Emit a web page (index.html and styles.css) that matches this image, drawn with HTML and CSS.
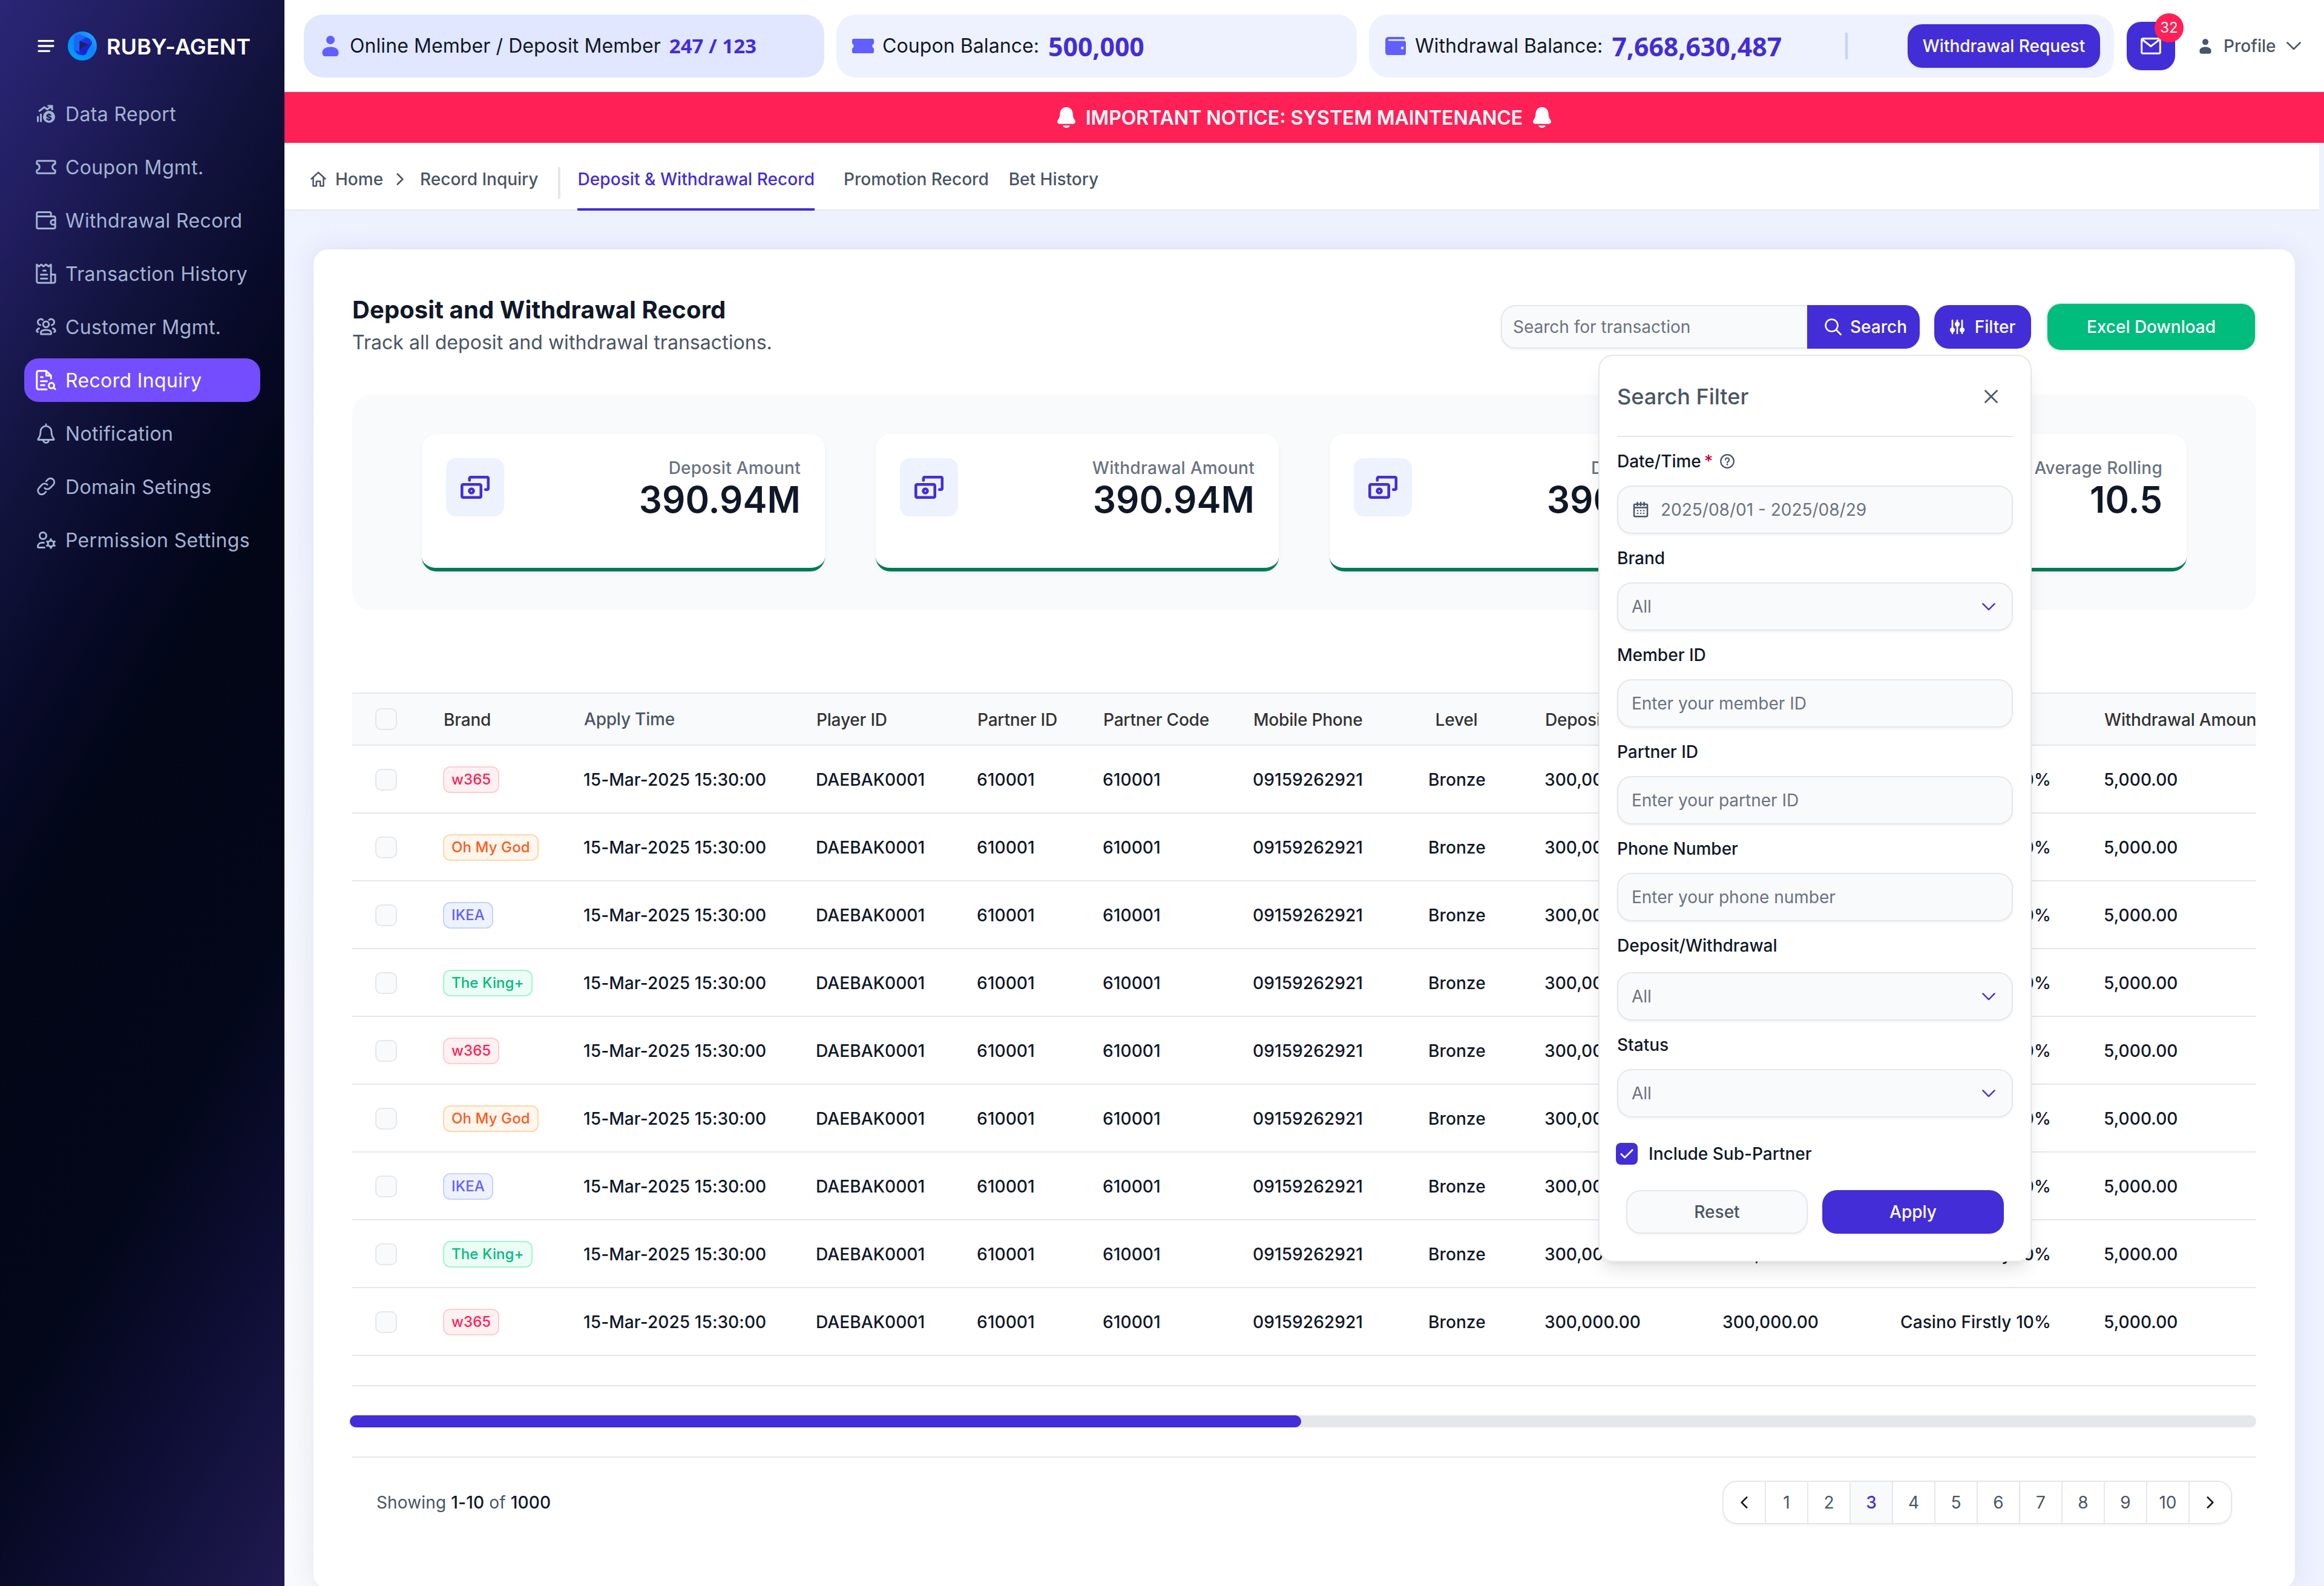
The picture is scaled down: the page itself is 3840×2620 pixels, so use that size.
FILE: index.html
```html
<!DOCTYPE html>
<html lang="en">
<head>
<meta charset="utf-8">
<title>Ruby-Agent – Deposit and Withdrawal Record</title>
<link rel="stylesheet" href="styles.css">
</head>
<body>
<svg class="sprite" aria-hidden="true">
  <defs>
    <linearGradient id="lg-base" x1="0" y1="1" x2="1" y2="0"><stop offset="0" stop-color="#00a2ff"/><stop offset=".6" stop-color="#0a84ff"/><stop offset="1" stop-color="#2cb1ff"/></linearGradient>
    <linearGradient id="lg-ring" x1="0" y1="0" x2="1" y2="1"><stop offset="0" stop-color="#1f6dff"/><stop offset=".5" stop-color="#1a35dc"/><stop offset="1" stop-color="#1a2fd4"/></linearGradient>
  </defs>
  <symbol id="i-menu" viewBox="0 0 40 40"><path d="M8 11.7h24M8 20h24M8 28.3h17.500" stroke="currentColor" stroke-width="3.300" stroke-linecap="round"/></symbol>
  <symbol id="i-chart" viewBox="0 0 40 40"><path d="M6.600 25v7.300M11.600 21v11.300M9.200 15.300l8-6.200 5 3.600 6.500-5.200" fill="none" stroke="currentColor" stroke-width="3" stroke-linecap="round" stroke-linejoin="round"/><path d="M22.500 5.400h7.700a1.400 1.400 0 0 1 1.400 1.400v7.200h-2.600l-1-3.500-3.300 1.200 1-3.400-3.200-.6z" fill="currentColor"/><circle cx="25" cy="25" r="10" fill="currentColor"/><text x="25" y="30.500" text-anchor="middle" font-size="15" font-weight="800" fill="#1f1c5a">$</text></symbol>
  <symbol id="i-ticket" viewBox="0 0 40 40"><path d="M6.500 9.800h27a1.700 1.700 0 0 1 1.700 1.700v3c-3 1-4.500 3-4.500 5.500s1.500 4.500 4.500 5.500v3a1.700 1.700 0 0 1-1.700 1.700h-27a1.700 1.700 0 0 1-1.700-1.700v-3c3-1 4.500-3 4.500-5.500s-1.500-4.500-4.500-5.500v-3a1.700 1.700 0 0 1 1.700-1.700z" fill="none" stroke="currentColor" stroke-width="3" stroke-linejoin="round"/></symbol>
  <symbol id="i-wallet" viewBox="0 0 40 40"><path d="M28.200 13.400V9a2.400 2.400 0 0 0-2.400-2.400H7.200A2.400 2.400 0 0 0 4.800 9v22a2.400 2.400 0 0 0 2.400 2.400h25.600a2.400 2.400 0 0 0 2.400-2.400V15.800a2.400 2.400 0 0 0-2.400-2.400H5M35 19.500h-3.400a3.800 3.800 0 0 0 0 7.600H35" fill="none" stroke="currentColor" stroke-width="3" stroke-linejoin="round"/></symbol>
  <symbol id="i-receipt" viewBox="0 0 40 40"><path d="M28.200 35.200V5l-4 3.200-4-3.200h-.7l-3.500 3.200L12 5l-3.600 3.200L4.800 5v27.500a2.700 2.700 0 0 0 2.700 2.700h25a2.700 2.700 0 0 0 2.700-2.700V21.600h-7M15.500 15h4M11.500 21.700h10.500M11.500 28.300h10.500" fill="none" stroke="currentColor" stroke-width="3" stroke-linejoin="round" stroke-linecap="round"/></symbol>
  <symbol id="i-users" viewBox="0 0 40 40"><g fill="none" stroke="currentColor" stroke-width="3" stroke-linecap="round" stroke-linejoin="round"><circle cx="20" cy="15.800" r="4.800"/><path d="M11.300 30.200c0-3.200 3.300-5.200 8.700-5.200s8.700 2 8.700 5.200c0 1.200-.6 1.900-1.700 1.900H13c-1.100 0-1.700-.7-1.700-1.900zM10.500 17a5 5 0 1 1 4.300-8.600M29.500 17a5 5 0 1 0-4.300-8.600M8.500 22.500c-2.400.8-3.700 2.300-3.700 4.200 0 .9.500 1.500 1.700 1.500M31.500 22.500c2.400.8 3.700 2.300 3.700 4.200 0 .9-.5 1.500-1.700 1.500"/></g></symbol>
  <symbol id="i-docsearch" viewBox="0 0 40 40"><g fill="none" stroke="currentColor" stroke-width="3" stroke-linecap="round" stroke-linejoin="round"><path d="M21 35.200H7.500a2.700 2.700 0 0 1-2.700-2.700v-25a2.700 2.700 0 0 1 2.700-2.700h13l7.700 7.500v5M20.500 5v7.500H28M11.500 15h3M11.500 21.700h10M11.500 28.300h6"/><circle cx="29" cy="29" r="4.500"/><path d="M32.500 32.300l2.700 2.500"/></g></symbol>
  <symbol id="i-bell" viewBox="0 0 40 40"><path d="M20 5v2.500M20 7.800a9 9 0 0 0-9 9c0 6.500-1.300 9.300-4 12.200v1.500h26V29c-2.700-2.900-4-5.700-4-12.200a9 9 0 0 0-9-9zM15.500 32c.6 2.200 2.200 3.400 4.500 3.400s3.900-1.200 4.500-3.400" fill="none" stroke="currentColor" stroke-width="2.800" stroke-linejoin="round" stroke-linecap="round"/></symbol>
  <symbol id="i-link" viewBox="0 0 40 40"><path d="M17.300 22.700a6.300 6.300 0 0 0 8.900 0l5.400-5.400a6.300 6.300 0 0 0-8.900-8.900l-3 3M21.700 17.300a6.300 6.300 0 0 0-8.900 0l-5 5.400a6.300 6.300 0 0 0 8.900 8.900l2.700-2.700" transform="translate(.5 -.5)" fill="none" stroke="currentColor" stroke-width="2.800" stroke-linecap="round"/></symbol>
  <symbol id="i-usercog" viewBox="0 0 40 40"><g fill="none" stroke="currentColor" stroke-width="3" stroke-linecap="round" stroke-linejoin="round"><circle cx="15" cy="13" r="5.500"/><path d="M17.500 32.500H8a1.500 1.500 0 0 1-1.500-1.500c0-4 3-6.500 7-6.500h3"/><circle cx="28" cy="26" r="4.800"/></g><path d="M28 17.500v3M28 31.500v3M35.400 21.800l-2.600 1.500M23.200 28.700l-2.600 1.500M20.600 21.800l2.600 1.500M32.800 28.700l2.600 1.500" stroke="currentColor" stroke-width="3.200"/></symbol>
  <symbol id="i-person" viewBox="0 0 28 34"><circle cx="14" cy="7" r="7" fill="currentColor"/><path d="M14 18.500c8 0 13.500 3.400 13.500 9.200 0 4.300-2 6.300-5 6.300h-17c-3 0-5-2-5-6.300C.5 21.900 6 18.500 14 18.500z" fill="currentColor"/></symbol>
  <symbol id="i-ticketfill" viewBox="0 0 36 24"><path d="M2.500 0h31A2.500 2.500 0 0 1 36 2.500V8c-1.700.8-2.600 2.200-2.600 4s.9 3.200 2.600 4v5.500a2.500 2.500 0 0 1-2.500 2.500h-31A2.500 2.500 0 0 1 0 21.500V16c1.700-.8 2.600-2.200 2.600-4S1.700 8.800 0 8V2.500A2.500 2.500 0 0 1 2.500 0z" fill="currentColor"/></symbol>
  <symbol id="i-walletfill" viewBox="0 0 34 30"><path d="M5 0h24.500A2.500 2.500 0 0 1 32 2.500V4H6a1.200 1.200 0 0 0 0 2.600h25a3 3 0 0 1 3 3V27a3 3 0 0 1-3 3H4.500A4.500 4.500 0 0 1 0 25.500V5a5 5 0 0 1 5-5zm23 16a2.200 2.200 0 1 0 0 4.400 2.200 2.200 0 0 0 0-4.400z" fill="currentColor"/></symbol>
  <symbol id="i-bellfill" viewBox="0 0 30 34"><path d="M15 0c6 0 10.200 4.400 10.600 10.500.3 4.800.8 7 2.900 10 1 1.400 1.500 2.400 1.500 3.600 0 2.400-1.800 3.700-4.600 3.700H4.600C1.800 27.800 0 26.500 0 24.100c0-1.200.5-2.200 1.500-3.600 2.100-3 2.600-5.200 2.900-10C4.800 4.400 9 0 15 0zM9 30.500h12c-.6 2.200-3 3.500-6 3.500s-5.400-1.300-6-3.500z" fill="currentColor"/></symbol>
  <symbol id="i-mail" viewBox="0 0 34 28"><path d="M3.500 1.700h27a1.800 1.800 0 0 1 1.800 1.800v21a1.800 1.800 0 0 1-1.800 1.800h-27a1.800 1.800 0 0 1-1.800-1.800v-21a1.800 1.800 0 0 1 1.800-1.800zM3.500 4L17 14.500 30.500 4" fill="none" stroke="currentColor" stroke-width="3" stroke-linejoin="round"/></symbol>
  <symbol id="i-down" viewBox="0 0 24 14"><path d="M1.500 1.500L12 12 22.500 1.500" fill="none" stroke="currentColor" stroke-width="2.600" stroke-linecap="round" stroke-linejoin="round"/></symbol>
  <symbol id="i-right" viewBox="0 0 12 20"><path d="M1.800 1.500L10.300 10l-8.500 8.500" fill="none" stroke="currentColor" stroke-width="2.600" stroke-linecap="round" stroke-linejoin="round"/></symbol>
  <symbol id="i-left" viewBox="0 0 12 20"><path d="M10.200 1.500L1.700 10l8.500 8.500" fill="none" stroke="currentColor" stroke-width="2.600" stroke-linecap="round" stroke-linejoin="round"/></symbol>
  <symbol id="i-home" viewBox="0 0 26 26"><path d="M1.500 12.500L13 1.800l11.500 10.700M4.500 10.500v13.700h5.300v-7.700h6.400v7.700h5.300V10.500" fill="none" stroke="currentColor" stroke-width="2.500" stroke-linejoin="round" stroke-linecap="round"/></symbol>
  <symbol id="i-search" viewBox="0 0 28 28"><circle cx="11.500" cy="11.500" r="10" fill="none" stroke="currentColor" stroke-width="2.600"/><path d="M19.500 19.500l7 7" stroke="currentColor" stroke-width="2.800" stroke-linecap="round"/></symbol>
  <symbol id="i-sliders" viewBox="0 0 24 24"><path d="M4 1.300v21.400M12 1.300v21.400M20 1.300v21.400" stroke="currentColor" stroke-width="2.700" stroke-linecap="round"/><circle cx="4" cy="17" r="4" fill="currentColor"/><circle cx="12" cy="7.500" r="4" fill="currentColor"/><circle cx="20" cy="17" r="4" fill="currentColor"/></symbol>
  <symbol id="i-money" viewBox="0 0 48 38"><g fill="none" stroke="currentColor" stroke-width="4.600" stroke-linecap="round" stroke-linejoin="round"><path d="M14.800 7.500V4.200a2 2 0 0 1 2-2h27a2 2 0 0 1 2 2v16.600a2 2 0 0 1-2 2h-2.600"/><rect x="2.300" y="14.300" width="31.400" height="21.400" rx="2"/><circle cx="18" cy="25" r="3.500"/></g></symbol>
  <symbol id="i-close" viewBox="0 0 22 22"><path d="M1.500 1.500l19 19M20.500 1.500l-19 19" stroke="currentColor" stroke-width="2.700" stroke-linecap="round"/></symbol>
  <symbol id="i-help" viewBox="0 0 24 24"><circle cx="12" cy="12" r="10.800" fill="none" stroke="currentColor" stroke-width="2.200"/><path d="M8.900 9.600a3.100 3.100 0 1 1 4.700 2.700c-1.100.6-1.600 1.100-1.600 2.200" fill="none" stroke="currentColor" stroke-width="2.200" stroke-linecap="round"/><circle cx="12" cy="17.600" r="1.400" fill="currentColor"/></symbol>
  <symbol id="i-calendar" viewBox="0 0 26 26"><path d="M3.500 4h19A1.500 1.500 0 0 1 24 5.500v17a1.800 1.800 0 0 1-1.800 1.800H3.800A1.800 1.800 0 0 1 2 22.500v-17A1.500 1.500 0 0 1 3.500 4zM2 9.500h22M7.500 1v5M13 1v5M18.500 1v5" fill="none" stroke="currentColor" stroke-width="2.500" stroke-linecap="round"/><path d="M8 13.500v2M13 13.500v2M18 13.500v2M8 18v2M13 18v2M18 18v2" stroke="currentColor" stroke-width="2.400"/></symbol>
  <symbol id="i-check" viewBox="0 0 22 16"><path d="M1.700 8.500l6 5.700L20.300 1.700" fill="none" stroke="currentColor" stroke-width="2.700" stroke-linecap="round" stroke-linejoin="round"/></symbol>
</svg>

<div class="app">
  <aside class="sidebar">
    <div class="brand">
      <svg class="ic40"><use href="#i-menu"/></svg>
      <svg class="logo" viewBox="0 0 48 48"><circle cx="24" cy="24" r="24" fill="url(#lg-base)"/><path d="M10 14.500C10 7 15.500 3.600 22 6l12.500 5.300c4.500 2.200 4 9-.5 11.500l-3 13.500c-2 4-9 3.500-13 1.700C12.500 35 10 30.500 10 25z" fill="url(#lg-ring)"/><path d="M10 27V14.500C10 7 15.500 3.600 22 6l8 3.400c-4 3-8 4-10.500 6.100V33c-5-1-9.500-2-9.500-6z" fill="#1c66f7"/><path d="M19.500 30v-6.500l9 .500 6.500-3c4-1.500 4-6 1-8 4 2 5.500 6.500 2 10L30 36c-3 4-10.500 2-10.500-6z" fill="#1a24cc"/><path d="M19.500 15.500l14.500 6-7 3.500-4 1.800-3.300 6z" fill="#221e63"/></svg>
      <span class="brand-name">RUBY-AGENT</span>
    </div>
    <nav class="menu">
      <a class="menu-item"><svg class="ic40"><use href="#i-chart"/></svg><span>Data Report</span></a>
      <a class="menu-item"><svg class="ic40"><use href="#i-ticket"/></svg><span>Coupon Mgmt.</span></a>
      <a class="menu-item"><svg class="ic40"><use href="#i-wallet"/></svg><span>Withdrawal Record</span></a>
      <a class="menu-item"><svg class="ic40"><use href="#i-receipt"/></svg><span>Transaction History</span></a>
      <a class="menu-item"><svg class="ic40"><use href="#i-users"/></svg><span>Customer Mgmt.</span></a>
      <a class="menu-item active"><svg class="ic40"><use href="#i-docsearch"/></svg><span>Record Inquiry</span></a>
      <a class="menu-item"><svg class="ic40"><use href="#i-bell"/></svg><span>Notification</span></a>
      <a class="menu-item"><svg class="ic40"><use href="#i-link"/></svg><span>Domain Setings</span></a>
      <a class="menu-item"><svg class="ic40"><use href="#i-usercog"/></svg><span>Permission Settings</span></a>
    </nav>
  </aside>

  <div class="page">
    <header class="topbar">
      <div class="pill pill-members"><svg width="28" height="34"><use href="#i-person"/></svg><span>Online Member / Deposit Member</span><b class="num-sm">247 / 123</b></div>
      <div class="pill pill-coupon"><svg width="36" height="24"><use href="#i-ticketfill"/></svg><span>Coupon Balance:</span><b class="num-lg">500,000</b></div>
      <div class="pill pill-withdraw"><svg width="34" height="30"><use href="#i-walletfill"/></svg><span>Withdrawal Balance:</span><b class="num-lg">7,668,630,487</b><i class="pill-sep"></i><button class="btn btn-request">Withdrawal Request</button></div>
      <button class="btn btn-mail"><svg width="34" height="28"><use href="#i-mail"/></svg><span class="badge">32</span></button>
      <div class="profile"><svg class="profile-pic" width="20" height="25"><use href="#i-person"/></svg><span>Profile</span><svg width="24" height="14"><use href="#i-down"/></svg></div>
    </header>

    <div class="notice"><svg width="30" height="34"><use href="#i-bellfill"/></svg><span>IMPORTANT NOTICE: SYSTEM MAINTENANCE</span><svg width="30" height="34"><use href="#i-bellfill"/></svg></div>

    <nav class="tabs">
      <svg width="26" height="26"><use href="#i-home"/></svg>
      <a class="crumb-home">Home</a>
      <svg class="crumb-sep" width="12" height="20"><use href="#i-right"/></svg>
      <a class="crumb">Record Inquiry</a>
      <i class="tab-divider"></i>
      <a class="tab active">Deposit &amp; Withdrawal Record</a>
      <a class="tab">Promotion Record</a>
      <a class="tab">Bet History</a>
    </nav>

    <main class="main">
      <section class="card">
        <div class="card-head">
          <div class="titles">
            <h1>Deposit and Withdrawal Record</h1>
            <p>Track all deposit and withdrawal transactions.</p>
          </div>
          <div class="tools">
            <div class="search">
              <div class="search-field">Search for transaction</div>
              <button class="btn search-btn"><svg width="28" height="28"><use href="#i-search"/></svg>Search</button>
            </div>
            <div class="filter">
              <button class="btn filter-btn"><svg width="24" height="24"><use href="#i-sliders"/></svg>Filter</button>
              <div class="popup">
                <div class="popup-head"><h2>Search Filter</h2><svg width="22" height="22"><use href="#i-close"/></svg></div>
                <div class="field"><label>Date/Time<em>*</em><svg width="24" height="24"><use href="#i-help"/></svg></label><div class="input input-date"><svg width="26" height="26"><use href="#i-calendar"/></svg>2025/08/01 - 2025/08/29</div></div>
                <div class="field"><label>Brand</label><div class="input select">All<svg width="22" height="13"><use href="#i-down"/></svg></div></div>
                <div class="field"><label>Member ID</label><div class="input">Enter your member ID</div></div>
                <div class="field"><label>Partner ID</label><div class="input">Enter your partner ID</div></div>
                <div class="field"><label>Phone Number</label><div class="input">Enter your phone number</div></div>
                <div class="field field-type"><label>Deposit/Withdrawal</label><div class="input select">All<svg width="22" height="13"><use href="#i-down"/></svg></div></div>
                <div class="field"><label>Status</label><div class="input select">All<svg width="22" height="13"><use href="#i-down"/></svg></div></div>
                <div class="sub-partner"><span class="tick"><svg width="22" height="16"><use href="#i-check"/></svg></span>Include Sub-Partner</div>
                <div class="popup-actions"><button class="btn btn-reset">Reset</button><button class="btn btn-apply">Apply</button></div>
              </div>
            </div>
            <button class="btn btn-excel">Excel Download</button>
          </div>
        </div>

        <div class="stats">
          <div class="stat"><div class="stat-icon"><svg width="48" height="38"><use href="#i-money"/></svg></div><div class="stat-text"><span>Deposit Amount</span><strong>390.94M</strong></div></div>
          <div class="stat"><div class="stat-icon"><svg width="48" height="38"><use href="#i-money"/></svg></div><div class="stat-text"><span>Withdrawal Amount</span><strong>390.94M</strong></div></div>
          <div class="stat"><div class="stat-icon"><svg width="48" height="38"><use href="#i-money"/></svg></div><div class="stat-text"><span>Deposit Count</span><strong>390.94M</strong></div></div>
          <div class="stat"><div class="stat-icon"><svg width="48" height="38"><use href="#i-money"/></svg></div><div class="stat-text"><span>Average Rolling</span><strong>10.5</strong></div></div>
        </div>

        <div class="table">
          <div class="tr th"><i class="box"></i><span>Brand</span><span class="sorted">Apply Time</span><span>Player ID</span><span>Partner ID</span><span>Partner Code</span><span>Mobile Phone</span><span class="level">Level</span><span>Deposit Amount</span><span>Bonus Amount</span><span>Promotion</span><span>Withdrawal Amount</span></div>
          <div class="tr"><i class="box"></i><span><b class="tag rose">w365</b></span><span>15-Mar-2025 15:30:00</span><span>DAEBAK0001</span><span>610001</span><span>610001</span><span>09159262921</span><span class="level">Bronze</span><span>300,000.00</span><span>300,000.00</span><span>Casino Firstly 10%</span><span>5,000.00</span></div>
          <div class="tr"><i class="box"></i><span><b class="tag orange">Oh My God</b></span><span>15-Mar-2025 15:30:00</span><span>DAEBAK0001</span><span>610001</span><span>610001</span><span>09159262921</span><span class="level">Bronze</span><span>300,000.00</span><span>300,000.00</span><span>Casino Firstly 10%</span><span>5,000.00</span></div>
          <div class="tr"><i class="box"></i><span><b class="tag indigo">IKEA</b></span><span>15-Mar-2025 15:30:00</span><span>DAEBAK0001</span><span>610001</span><span>610001</span><span>09159262921</span><span class="level">Bronze</span><span>300,000.00</span><span>300,000.00</span><span>Casino Firstly 10%</span><span>5,000.00</span></div>
          <div class="tr"><i class="box"></i><span><b class="tag green">The King+</b></span><span>15-Mar-2025 15:30:00</span><span>DAEBAK0001</span><span>610001</span><span>610001</span><span>09159262921</span><span class="level">Bronze</span><span>300,000.00</span><span>300,000.00</span><span>Casino Firstly 10%</span><span>5,000.00</span></div>
          <div class="tr"><i class="box"></i><span><b class="tag rose">w365</b></span><span>15-Mar-2025 15:30:00</span><span>DAEBAK0001</span><span>610001</span><span>610001</span><span>09159262921</span><span class="level">Bronze</span><span>300,000.00</span><span>300,000.00</span><span>Casino Firstly 10%</span><span>5,000.00</span></div>
          <div class="tr"><i class="box"></i><span><b class="tag orange">Oh My God</b></span><span>15-Mar-2025 15:30:00</span><span>DAEBAK0001</span><span>610001</span><span>610001</span><span>09159262921</span><span class="level">Bronze</span><span>300,000.00</span><span>300,000.00</span><span>Casino Firstly 10%</span><span>5,000.00</span></div>
          <div class="tr"><i class="box"></i><span><b class="tag indigo">IKEA</b></span><span>15-Mar-2025 15:30:00</span><span>DAEBAK0001</span><span>610001</span><span>610001</span><span>09159262921</span><span class="level">Bronze</span><span>300,000.00</span><span>300,000.00</span><span>Casino Firstly 10%</span><span>5,000.00</span></div>
          <div class="tr"><i class="box"></i><span><b class="tag green">The King+</b></span><span>15-Mar-2025 15:30:00</span><span>DAEBAK0001</span><span>610001</span><span>610001</span><span>09159262921</span><span class="level">Bronze</span><span>300,000.00</span><span>300,000.00</span><span>Casino Firstly 10%</span><span>5,000.00</span></div>
          <div class="tr"><i class="box"></i><span><b class="tag rose">w365</b></span><span>15-Mar-2025 15:30:00</span><span>DAEBAK0001</span><span>610001</span><span>610001</span><span>09159262921</span><span class="level">Bronze</span><span>300,000.00</span><span>300,000.00</span><span>Casino Firstly 10%</span><span>5,000.00</span></div>
        </div>

        <div class="scroll-area"><div class="scroll-track"><div class="scroll-thumb"></div></div></div>

        <footer class="card-foot">
          <p>Showing <b>1-10</b> of <b>1000</b></p>
          <div class="pager">
            <a class="arrow"><svg width="12" height="20"><use href="#i-left"/></svg></a><a>1</a><a>2</a><a class="current">3</a><a>4</a><a>5</a><a>6</a><a>7</a><a>8</a><a>9</a><a>10</a><a class="arrow"><svg width="12" height="20"><use href="#i-right"/></svg></a>
          </div>
        </footer>
      </section>
    </main>
  </div>
</div>
</body>
</html>
```
FILE: styles.css
```css
* { box-sizing: border-box; margin: 0; padding: 0; }
html, body { height: 100%; overflow: hidden; }
body { font-family: Inter, "Liberation Sans", sans-serif; font-size: 28px; line-height: 40px; color: #101828; background: #fff; }
svg { display: block; flex: none; overflow: visible; }
i, em { font-style: normal; }
.sprite { position: absolute; width: 0; height: 0; }
.ic40 { width: 40px; height: 40px; }

.app { display: flex; width: 3840px; height: 2620px; overflow: hidden; }

/* Sidebar */
.sidebar { flex: none; width: 470px; padding: 52px 40px 0; color: #a3b3d3; background: linear-gradient(120deg, #2b2676 0, #211d5f 12%, #12133d 25%, #080a28 36%, #020617 47%, #030719 68%, #0e0e35 83%, #1f1a50 100%); }
.brand { display: flex; align-items: center; height: 48px; padding-left: 16px; color: #fff; }
.logo { width: 48px; height: 48px; margin-left: 16px; }
.brand-name { margin: 2px 0 0 16px; font-size: 36px; font-weight: 600; letter-spacing: .1px; white-space: nowrap; }
.menu { display: flex; flex-direction: column; gap: 16px; margin-top: 52px; }
.menu-item { display: flex; align-items: center; gap: 12px; height: 72px; padding: 0 16px; border-radius: 24px; font-size: 32px; letter-spacing: .35px; white-space: nowrap; }
.menu-item span { padding-top: 2px; }
.menu-item.active { color: #fff; background: #744dff; width: 390px; }

.page { flex: 1; min-width: 0; display: flex; flex-direction: column; background: linear-gradient(to top right, #f9fafb 0, #eef2ff 45%); }
.btn { display: flex; align-items: center; justify-content: center; border: 0; border-radius: 24px; background: #432dd7; color: #fff; font: 500 28px/40px Inter, "Liberation Sans", sans-serif; white-space: nowrap; box-shadow: 0 2px 4px rgba(0,0,0,.05); }

/* Top bar */
.topbar { flex: none; display: flex; align-items: center; height: 152px; padding-left: 32px; background: #fff; }
.pill { display: flex; align-items: center; height: 104px; margin-right: 20px; border-radius: 32px; background: #eef2ff; font-size: 32px; letter-spacing: .08px; white-space: nowrap; }
.pill svg { color: #615fff; }
.pill b { color: #432dd7; font-family: "Noto Sans", sans-serif; letter-spacing: 0; }
.pill-members { width: 860px; padding-left: 30px; background: #e0e7ff; }
.pill-members span { margin-left: 18px; }
.pill-coupon { width: 860px; padding-left: 26px; }
.pill-coupon span { margin-left: 14px; }
.pill-withdraw { width: 1231px; padding-left: 27px; }
.pill-withdraw span { margin-left: 15px; }
.num-sm { margin-left: 14px; font-size: 33px; }
.num-lg { margin: 2px 0 0 15px; font-size: 42.7px; }
.pill-sep { width: 4px; height: 44px; margin-left: auto; background: #c6d2ff; }
.btn-request { width: 318px; height: 72px; margin: 0 23px 0 99px; }
.btn-mail { position: relative; width: 80px; height: 80px; margin-left: 1px; }
.badge { position: absolute; top: -14px; right: -14px; width: 48px; height: 48px; border-radius: 50%; background: #ff2056; font-size: 24px; line-height: 48px; font-weight: 400; text-align: center; }
.profile { display: flex; align-items: center; margin-left: 40px; color: #4a5565; font-weight: 500; }
.profile span { margin: 0 18px 0 20px; }

.notice { position: relative; z-index: 2; flex: none; display: flex; align-items: center; justify-content: center; gap: 17px; height: 84px; background: #ff2056; color: #fff; font-size: 32px; font-weight: 600; white-space: nowrap; }
.notice span { padding-top: 2px; }

/* Breadcrumb and tabs */
.tabs { flex: none; display: flex; align-items: center; width: 3362px; height: 112px; padding: 18px 0 8px 43px; border-bottom: 2px solid #e5e7eb; background: #fff; color: #4a5565; font-weight: 500; white-space: nowrap; }
.crumb-home { margin-left: 15px; }
.crumb-sep { margin: 0 27px 0 22px; }
.tab-divider { width: 4px; height: 52px; margin: 12px 28px 0 33px; background: #e5e7eb; }
.tab { margin-right: 33px; }
.tab.active { align-self: stretch; margin: -18px 48px -10px 0; padding-top: 40px; border-bottom: 4px solid #432dd7; color: #432dd7; letter-spacing: .07px; }

.main { flex: 1; min-height: 0; padding: 64px 48px 0; }

.card { height: 2212px; padding: 64px 64px 0; border-radius: 24px; background: #fff; box-shadow: 0 0 40px rgba(60,60,140,.1); }
.card-head { display: flex; justify-content: space-between; align-items: flex-start; height: 176px; }
.titles { padding-top: 8px; }
h1 { font-size: 40px; line-height: 56px; font-weight: 700; letter-spacing: .1px; }
.titles p { font-size: 32px; line-height: 52px; color: #4a5565; letter-spacing: .05px; }
.tools { display: flex; align-items: center; margin-top: 24px; height: 80px; }
.search { display: flex; width: 692px; height: 72px; margin-right: 24px; }
.search-field { width: 506px; padding: 14px 18px; border: 2px solid #e5e7eb; border-right: 0; border-radius: 24px 0 0 24px; background: #f9fafb; color: #6a7282; box-shadow: 0 2px 4px rgba(0,0,0,.05); }
.search-btn { width: 186px; gap: 14px; padding-left: 8px; border-radius: 0 24px 24px 0; }
.filter { position: relative; z-index: 5; margin-right: 25px; }
.filter-btn { width: 160px; height: 72px; gap: 17px; }
.btn-excel { width: 347px; height: 80px; border: 2px solid #e5e7eb; background: #00bc7d; }

/* Filter popup */
.popup { position: absolute; top: 82px; right: -1px; width: 716px; height: 1498px; padding: 0 29px; border: 2px solid #e5e7eb; border-bottom-color: #f3f4f6; border-radius: 24px; background: #fff; box-shadow: 0 20px 30px -6px rgba(0,0,0,.1), 0 8px 12px -8px rgba(0,0,0,.1); }
.popup-head { display: flex; align-items: center; justify-content: space-between; height: 134px; padding: 2px 25px 0 0; border-bottom: 2px solid #e5e7eb; color: #4a5565; }
h2 { font-size: 36px; font-weight: 500; }
.field { display: flex; flex-direction: column; gap: 20px; margin-top: 20px; }
.field label { display: flex; align-items: center; height: 40px; font-weight: 500; }
.field em { margin-left: 5px; color: #c70036; }
.field label svg { margin-left: 12px; color: #4a5565; }
.input { display: flex; align-items: center; height: 80px; padding: 0 22px; border: 2px solid #e5e7eb; border-radius: 24px; background: #f9fafb; color: #6a7282; box-shadow: 0 2px 4px rgba(0,0,0,.05); }
.input-date { gap: 20px; padding-left: 24px; }
.input-date svg { color: #4a5565; }
.select { justify-content: space-between; padding-right: 27px; }
.select svg { color: #432dd7; }
.field-type { gap: 24px; }
.sub-partner { display: flex; align-items: center; gap: 18px; height: 40px; margin: 40px 0 0 -2px; font-weight: 500; }
.tick { display: flex; align-items: center; justify-content: center; width: 36px; height: 36px; border-radius: 8px; background: #432dd7; color: #fff; }
.popup-actions { display: flex; justify-content: center; gap: 24px; margin-top: 40px; }
.popup-actions .btn { width: 300px; height: 72px; }
.popup-actions .btn-reset { border: 2px solid #e5e7eb; background: #f9fafb; color: #4a5565; }

/* Totals */
.stats { display: flex; gap: 84px; height: 356px; padding: 65px 115px 64px; border-radius: 32px; background: #f9fafb; }
.stat { flex: 1; display: flex; justify-content: space-between; padding: 40px 40px 0; border-bottom: 6px solid #007a55; border-radius: 24px; background: #fff; box-shadow: 0 2px 6px rgba(0,0,0,.05); }
.stat-icon { display: flex; align-items: center; justify-content: center; width: 96px; height: 96px; border-radius: 16px; background: #eef2ff; color: #432dd7; }
.stat-text { display: flex; flex-direction: column; align-items: flex-end; margin-top: -4px; }
.stat-text span { color: #6a7282; font-weight: 500; letter-spacing: .25px; }
.stat-text strong { margin-top: 2px; font-size: 60px; line-height: 60px; font-weight: 600; letter-spacing: .1px; }

/* Records table */
.table { margin-top: 136px; overflow: hidden; font-weight: 500; letter-spacing: .1px; }
.tr { display: grid; grid-template-columns: 150px 232px 384px 266px 208px 248px 290px 192px 294px 294px 336px 298px; width: 3192px; align-items: center; height: 112px; padding-top: 2px; border-bottom: 2px solid #e5e7eb; white-space: nowrap; }
.th { height: 88px; padding-top: 0; border-top: 2px solid #e5e7eb; background: #f9fafb; color: #333; letter-spacing: -.2px; }
.th span { padding: 2px 0 0 1px; }
.th .sorted { padding-top: 0; color: #4a5565; }
.box { width: 36px; height: 36px; margin-left: 38px; border: 2px solid #e5e7eb; border-radius: 10px; background: #f9fafb; }
.level { width: 92px; text-align: center; }
.tag { display: inline-block; height: 44px; padding: 0 12px; border: 2px solid; border-radius: 12px; font-size: 24px; line-height: 40px; font-weight: 500; vertical-align: middle; }
.rose { color: #ff2056; background: #fff1f2; border-color: #ffccd3; }
.orange { color: #ff5a1f; background: #fff7ed; border-color: #ffd6a7; }
.indigo { color: #615fff; background: #eef2ff; border-color: #c6d2ff; }
.green { color: #00bc7d; background: #ecfdf5; border-color: #a4f4cf; }

.scroll-area { height: 120px; margin-top: 48px; padding-top: 48px; border: solid #e5e7eb; border-width: 2px 0; }
.scroll-track { height: 20px; margin-left: -4px; border-radius: 10px; background: #e5e7eb; }
.scroll-thumb { width: 1572px; height: 20px; border-radius: 10px; background: #432dd7; }

.card-foot { display: flex; align-items: center; justify-content: space-between; height: 72px; margin-top: 38px; padding: 0 40px; color: #4a5565; }
.card-foot p { letter-spacing: .15px; }
.card-foot b { color: #101828; font-weight: 500; }
.pager { display: flex; height: 72px; border: 2px solid #e5e7eb; border-radius: 24px; overflow: hidden; box-shadow: 0 2px 4px rgba(0,0,0,.05); }
.pager a { display: flex; align-items: center; justify-content: center; width: 70px; border-right: 2px solid #e5e7eb; }
.pager a:last-child { width: 68px; border-right: 0; }
.pager .arrow { color: #101828; }
.pager .current { background: #f9fafb; color: #432dd7; font-weight: 500; }
```
